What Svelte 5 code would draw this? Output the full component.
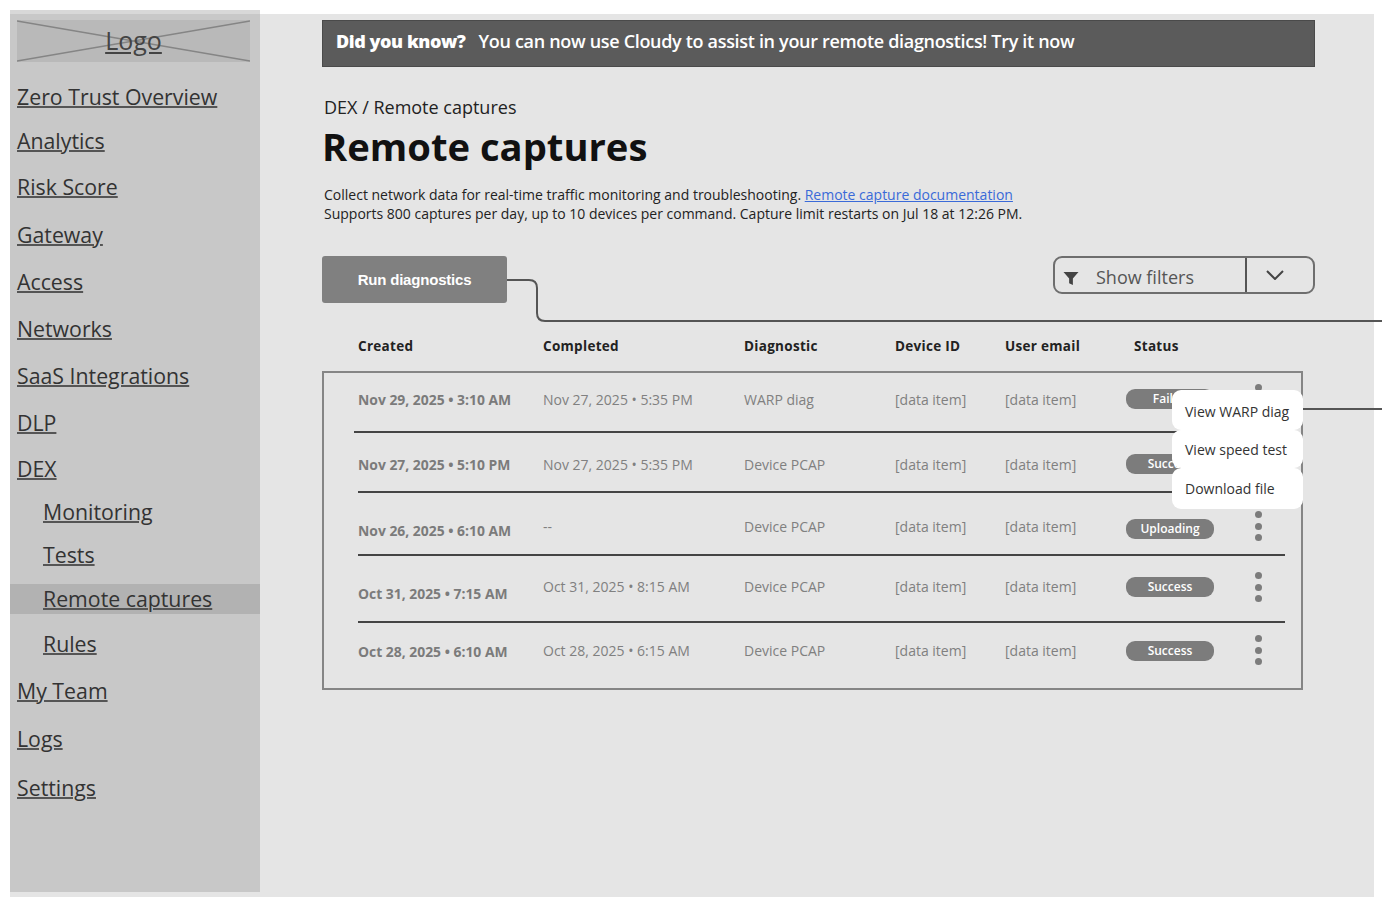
<script>
  const nav = [
    { label: 'Zero Trust Overview', h: 44 },
    { label: 'Analytics', h: 45 },
    { label: 'Risk Score', h: 47 },
    { label: 'Gateway', h: 48 },
    { label: 'Access', h: 47 },
    { label: 'Networks', h: 47 },
    { label: 'SaaS Integrations', h: 47 },
    { label: 'DLP', h: 47 },
    { label: 'DEX', h: 45 },
    { label: 'Monitoring', h: 40, sub: true },
    { label: 'Tests', h: 46, sub: true },
    { label: 'Remote captures', h: 44, sub: true, active: true },
    { label: 'Rules', h: 45, sub: true },
    { label: 'My Team', h: 48 },
    { label: 'Logs', h: 48 },
    { label: 'Settings', h: 50 }
  ];

  const rows = [
    { created: 'Nov 29, 2025 • 3:10 AM', completed: 'Nov 27, 2025 • 5:35 PM', diagnostic: 'WARP diag', status: 'Failed', h: 60, top: 0, bottom: 6, createdTop: 0, pillTop: 0, dotsTop: 0 },
    { created: 'Nov 27, 2025 • 5:10 PM', completed: 'Nov 27, 2025 • 5:35 PM', diagnostic: 'Device PCAP', status: 'Success', h: 60, top: 4, bottom: 0, createdTop: 0, pillTop: 0, dotsTop: 0 },
    { created: 'Nov 26, 2025 • 6:10 AM', completed: '--', diagnostic: 'Device PCAP', status: 'Uploading', h: 63, top: 5, bottom: 0, createdTop: 8, pillTop: 6, dotsTop: 0 },
    { created: 'Oct 31, 2025 • 7:15 AM', completed: 'Oct 31, 2025 • 8:15 AM', diagnostic: 'Device PCAP', status: 'Success', h: 67, top: 0, bottom: 5, createdTop: 14, pillTop: 2, dotsTop: 2 },
    { created: 'Oct 28, 2025 • 6:10 AM', completed: 'Oct 28, 2025 • 6:15 AM', diagnostic: 'Device PCAP', status: 'Success', h: 65, top: 0, bottom: 11, createdTop: 2, pillTop: 2, dotsTop: 0 }
  ];

  const columns = ['Created', 'Completed', 'Diagnostic', 'Device ID', 'User email', 'Status'];
  const menuItems = ['View WARP diag', 'View speed test', 'Download file'];
</script>

<div class="shell">
  <aside class="sidebar">
    <div class="logo">
      <svg class="logo-x" viewBox="0 0 233 42" preserveAspectRatio="none">
        <line x1="0" y1="1" x2="233" y2="41" />
        <line x1="0" y1="41" x2="233" y2="1" />
      </svg>
      <span class="logo-text">Logo</span>
    </div>
    <nav class="nav">
      {#each nav as item}
        <div class="nav-item" class:sub={item.sub} class:active={item.active} style="height: {item.h}px">
          <span class="nav-label">{item.label}</span>
        </div>
      {/each}
    </nav>
  </aside>

  <main class="main">
    <div class="banner">
      <strong>Did you know?</strong>
      <span>You can now use Cloudy to assist in your remote diagnostics! Try it now</span>
    </div>

    <div class="crumb">DEX / Remote captures</div>
    <h1>Remote captures</h1>
    <p class="desc">
      Collect network data for real-time traffic monitoring and troubleshooting. <span class="link">Remote capture documentation</span><br />
      Supports 800 captures per day, up to 10 devices per command. Capture limit restarts on Jul 18 at 12:26 PM.
    </p>

    <div class="actions">
      <button class="run">Run diagnostics</button>
      <div class="filters">
        <div class="filters-main">
          <svg class="funnel" viewBox="0 0 16 16">
            <path d="M0 1h16L10 8v7L6 13V8z" />
          </svg>
          <span>Show filters</span>
        </div>
        <div class="filters-toggle">
          <svg viewBox="0 0 18 10" width="18" height="10">
            <path d="M1 1l8 8 8-8" />
          </svg>
        </div>
      </div>
    </div>

    <div class="head grid">
      {#each columns as col}
        <div>{col}</div>
      {/each}
    </div>

    <div class="table">
      {#each rows as row}
        <div class="row grid" style="height: {row.h}px; padding-top: {row.top}px; padding-bottom: {row.bottom}px">
          <div class="created" style="padding-top: {row.createdTop}px">{row.created}</div>
          <div>{row.completed}</div>
          <div>{row.diagnostic}</div>
          <div>[data item]</div>
          <div>[data item]</div>
          <div class="status-cell">
            <span class="pill" style="margin-top: {row.pillTop}px">{row.status}</span>
            <span class="dots" style="margin-top: {row.dotsTop}px"><i></i><i></i><i></i></span>
          </div>
        </div>
      {/each}
    </div>
  </main>

  <div class="menu">
    {#each menuItems as item}
      <div class="menu-item">{item}</div>
    {/each}
  </div>
</div>

<svg class="links" width="1382" height="914" viewBox="0 0 1382 914">
  <path d="M507 280H529Q537 280 537 288V313Q537 321 545 321H1382" />
  <path d="M1303 409H1382" />
</svg>

<style>
  :global(body) {
    background: #fff;
    font-family: "Open Sans", "Liberation Sans", sans-serif;
    color: #222;
  }

  .shell {
    display: flex;
    margin: 14px 0 0 10px;
    width: 1364px;
    height: 883px;
    background: #e5e5e5;
  }

  .sidebar {
    width: 250px;
    height: 882px;
    margin-top: -4px;
    padding: 6px 0 0;
    background: #c8c8c8;
    border-top: 4px solid #d8d8d8;
    box-sizing: border-box;
  }

  .logo {
    position: relative;
    display: flex;
    align-items: center;
    justify-content: center;
    width: 233px;
    height: 42px;
    margin-left: 7px;
    background: #b9b9b9;
  }

  .logo-x {
    position: absolute;
    inset: 0;
    width: 100%;
    height: 100%;
  }

  .logo-x line {
    stroke: #858585;
    stroke-width: 1.5;
  }

  .logo-text {
    position: relative;
    padding-bottom: 3px;
    font-size: 25px;
    color: #444;
    text-decoration: underline;
  }

  .nav {
    margin-top: 12px;
  }

  .nav-item {
    display: flex;
    align-items: center;
    padding-left: 7px;
    font-size: 21.3px;
    color: #333;
  }

  .nav-label {
    text-decoration: underline;
    text-decoration-thickness: 2px;
    text-decoration-color: #555;
  }

  .nav-item.sub {
    padding-left: 33px;
  }

  .nav-item.active .nav-label {
    display: block;
    line-height: 30px;
    width: 100%;
    margin-left: -33px;
    padding-left: 33px;
    background: #b2b2b2;
  }

  .main {
    flex: 1;
    padding: 6px 0 0 62px;
    min-width: 0;
  }

  .banner {
    display: flex;
    align-items: center;
    gap: 13px;
    box-sizing: border-box;
    width: 993px;
    height: 47px;
    padding: 0 0 6px 13px;
    background: #5b5b5b;
    border: 1px solid #4a4a4a;
    color: #fff;
    font-size: 18px;
    font-weight: 600;
    letter-spacing: -0.32px;
  }

  .banner strong {
    letter-spacing: -0.45px;
  }

  .crumb {
    margin: 28px 0 0 2px;
    font-size: 18px;
    line-height: 24px;
  }

  h1 {
    margin: 2px 0 0;
    font-size: 38.2px;
    line-height: 50px;
    font-weight: 700;
    color: #111;
  }

  .desc {
    margin: 14px 0 0 2px;
    font-size: 14px;
    line-height: 19px;
    color: #222;
  }

  .link {
    color: #3a6ad8;
    text-decoration: underline;
  }

  .actions {
    display: flex;
    justify-content: space-between;
    align-items: flex-start;
    width: 993px;
    margin-top: 33px;
  }

  .run {
    width: 185px;
    height: 47px;
    border: none;
    border-radius: 3px;
    background: #808080;
    color: #fff;
    font-family: "Liberation Sans", sans-serif;
    font-size: 15px;
    font-weight: 700;
    letter-spacing: -0.2px;
  }

  .filters {
    display: flex;
    width: 262px;
    height: 38px;
    box-sizing: border-box;
    border: 2px solid #6e6e6e;
    border-radius: 9px;
  }

  .filters-main {
    display: flex;
    align-items: center;
    flex: 1;
    padding: 3px 0 0 8px;
    gap: 17px;
    font-size: 18px;
    color: #555;
    border-right: 2px solid #555;
  }

  .funnel {
    width: 16px;
    height: 15px;
    margin-top: 3px;
    fill: #444;
  }

  .filters-toggle {
    display: flex;
    align-items: center;
    justify-content: center;
    width: 66px;
    padding-right: 10px;
    box-sizing: border-box;
  }

  .filters-toggle path {
    fill: none;
    stroke: #444;
    stroke-width: 2;
  }

  .grid {
    display: grid;
    grid-template-columns: 185px 201px 151px 110px 121px 1fr;
    align-items: center;
  }

  .head {
    margin-top: 31px;
    height: 24px;
    padding-left: 36px;
    font-size: 13.5px;
    font-weight: 700;
    letter-spacing: 0.3px;
    color: #222;
  }

  .head div:last-child {
    padding-left: 8px;
  }

  .table {
    width: 981px;
    margin-top: 13px;
    box-sizing: border-box;
    border: 2px solid #858585;
  }

  .row {
    box-sizing: border-box;
    margin: 0 16px 0 34px;
    border-bottom: 2px solid #444;
    font-size: 14px;
    color: #808080;
  }

  .row:last-child {
    border-bottom: none;
  }

  .row:first-child {
    margin-left: 30px;
    padding-left: 4px;
  }

  .created {
    font-size: 13.9px;
    font-weight: 700;
    color: #7b7b7b;
  }

  .status-cell {
    display: flex;
    align-items: center;
  }

  .pill {
    display: inline-block;
    width: 88px;
    height: 20px;
    border-radius: 9px;
    background: #7c7c7c;
    color: #fff;
    font-size: 12px;
    font-weight: 600;
    line-height: 20px;
    text-align: center;
  }

  .dots {
    display: flex;
    flex-direction: column;
    gap: 4.5px;
    margin-left: 41px;
  }

  .dots i {
    display: block;
    width: 7px;
    height: 7px;
    border-radius: 50%;
    background: #7c7c7c;
  }

  .menu {
    position: absolute;
    left: 1172px;
    top: 390px;
    width: 131px;
  }

  .menu-item {
    display: flex;
    align-items: center;
    height: 38px;
    padding-left: 13px;
    background: #fff;
    border-radius: 9px;
    font-size: 14px;
    color: #333;
  }

  .menu-item:first-child {
    height: 40px;
    padding-top: 2px;
    box-sizing: border-box;
  }

  .menu-item:last-child {
    height: 41px;
  }

  .links {
    position: absolute;
    left: 0;
    top: 0;
    pointer-events: none;
  }

  .links path {
    fill: none;
    stroke: #555;
    stroke-width: 2;
  }
</style>
